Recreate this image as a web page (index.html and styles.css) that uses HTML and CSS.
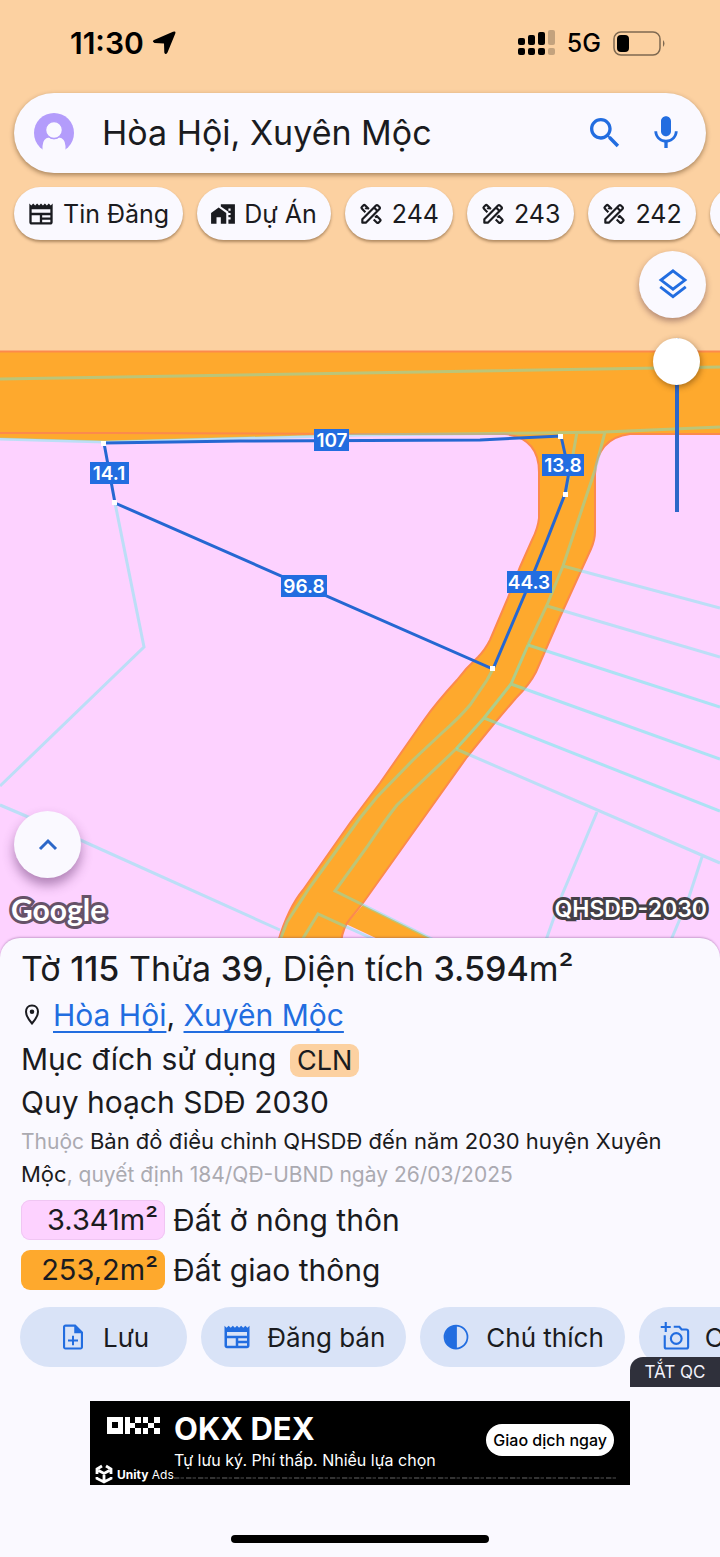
FILE: index.html
```html
<!DOCTYPE html>
<html lang="vi">
<head>
<meta charset="utf-8">
<meta name="viewport" content="width=device-width, initial-scale=1">
<title>Hòa Hội, Xuyên Mộc</title>
<link rel="stylesheet" href="styles.css">
</head>
<body>
<svg class="defs" aria-hidden="true">
  <symbol id="i-news" viewBox="0 0 24 24"><path d="M22 3l-1.67 1.67L18.67 3 17 4.67 15.33 3l-1.66 1.67L12 3l-1.67 1.67L8.67 3 7 4.67 5.33 3 3.67 4.67 2 3v16c0 1.1.9 2 2 2h16c1.1 0 2-.9 2-2V3zM11 19H4v-6h7v6zm9 0h-7v-2h7v2zm0-4h-7v-2h7v2zm0-4H4V8h16v3z"/></symbol>
  <symbol id="i-design" viewBox="0 0 24 24"><g fill="none" stroke="currentColor" stroke-width="2" stroke-linejoin="round"><path d="M14.500 17L17.500 20Q18.200 20.600 18.900 20L20.500 18.400Q21.200 17.700 20.500 17L17.300 13.800L15.800 15.300M6.800 10.300L3.500 7Q2.800 6.300 3.500 5.600L5.100 4Q5.800 3.300 6.500 4L10 7.500M8.300 5.800L6.800 7.300"/><path d="M4 20V16.800L16.600 4.200Q17.500 3.300 18.400 4.200L19.800 5.600Q20.700 6.500 19.800 7.400L7.200 20zM14.800 6L18 9.200"/></g></symbol>
</svg>

<main class="screen">
  <section class="map">
    <svg class="map-canvas" viewBox="0 0 720 958" preserveAspectRatio="xMidYMin slice" role="img" aria-label="Bản đồ quy hoạch">
      <rect width="720" height="360" fill="#fcd1a1"/>
      <rect y="434" width="720" height="524" fill="#fdd2ff"/>
      <rect y="351" width="720" height="84" fill="#fea92d"/>
      <path d="M0 434 V438 L105 441 L360 434z" fill="#fea92d"/>
      <path class="road" d="M505 434 Q539 438 539 472 V518 Q538 528 532 540 L520 567 L507 600 L490 640 Q485 650 478 657 Q466 668 457 680 Q436 703 424 720 L380 783 L350 823 L303 890 Q288 908 278 942 H341 Q343 927 350 919 L363 903 L410 837 L467 757 L493 725 L516 698 Q530 684 536 672 L560 617 L580 573 L591 549 Q595 540 595 532 V474 Q597 438 630 434z"/>
      <path d="M363 905 L434 940 H380 L346 924z" fill="#fea92d"/>
      <path class="road-edge" d="M0 351.500H720M0 433H110L360 434H505Q539 438 539 472V518Q538 528 532 540L520 567L507 600L490 640Q485 650 478 657Q466 668 457 680Q436 703 424 720L380 783L350 823L303 890Q288 908 278 942M341 942Q343 927 350 919L363 903L410 837L467 757L493 725L516 698Q530 684 536 672L560 617L580 573L591 549Q595 540 595 532V474Q597 438 630 434H720"/>
      <path class="parcel" d="M0 379L360 373L720 367M0 439L105 442L360 435L540 433L605 432L720 427M577 432L572 460L566 494M493 669L487 680L470 705Q460 717 443 732L413 760L377 797L360 818L310 887L287 922L280 940M605 432L595 470L563 566L547 605L528 645M456 749L397 805Q385 820 367 847L335 891L434 940M302 940L318 914L375 940M563 566L720 608M547 606L720 657M456 749L720 863M597 812L562 895L546 940M702 857L688 900L671 940M115 503L144 647L0 786M0 805L47 825L280 930"/>
      <path class="parcel parcel-strong" d="M528 645L511 684L484 718L456 749M528 645L720 707M511 684L720 759M484 718L720 811"/>
      <path class="plot" d="M104 443L240 441L480 440L561 436L569 472L565 494L547 540L530 582L493 669L115 503z"/>
      <g fill="#fff">
        <rect x="101" y="441" width="5" height="5"/><rect x="112" y="500" width="5" height="5"/><rect x="558" y="434" width="5" height="5"/><rect x="563" y="492" width="5" height="5"/><rect x="490" y="666" width="5" height="5"/>
      </g>
      <g fill="#226de0">
        <rect x="314" y="429" width="35" height="22"/><rect x="90" y="462" width="39" height="22"/><rect x="281" y="575" width="46" height="22"/><rect x="542" y="454" width="42" height="22"/><rect x="507" y="571" width="45" height="22"/>
      </g>
      <g class="length">
        <text x="332" y="447">107</text><text x="109" y="480">14.1</text><text x="304" y="593">96.8</text><text x="563" y="472">13.8</text><text x="529" y="589">44.3</text>
      </g>
    </svg>

    <header class="top">
      <div class="status">
        <span class="time">11:30</span>
        <svg class="arrow" width="24" height="24" viewBox="0 0 24 24"><path d="M21 .8Q24.300-.5 23.200 2.800L15.500 21.500Q13.500 24.500 12.300 21.500L12 12.500L2.500 12Q-.5 10.500 2 9z"/></svg>
        <span class="spacer"></span>
        <svg width="37" height="26" viewBox="0 0 37 26"><rect y="8" width="7" height="7" rx="2"/><rect x="10" y="5" width="7" height="10" rx="2"/><rect x="20" y="2" width="7" height="13" rx="2"/><rect y="18" width="7" height="7" rx="2"/><rect x="10" y="18" width="7" height="7" rx="2"/><rect x="20" y="18" width="7" height="7" rx="2"/><g opacity=".22"><rect x="30" width="7" height="15" rx="2"/><rect x="30" y="18" width="7" height="7" rx="2"/></g></svg>
        <span class="net">5G</span>
        <svg width="53" height="25" viewBox="0 0 53 25"><rect x="1" y="1" width="46" height="23" rx="7" fill="none" stroke="#000" stroke-opacity=".5" stroke-width="1.500"/><rect x="4" y="4" width="12" height="17" rx="4"/><path d="M50 9q3 3.500 0 7z" opacity=".5"/></svg>
      </div>

      <form class="search">
        <svg class="avatar" width="42" height="42" viewBox="0 0 42 42"><circle cx="21" cy="21" r="20" fill="#b39cfb"/><path d="M9.500 42V34Q10 26 16 25.500Q21 29 26 25.500Q32 26 32.500 34V42z" fill="#faf9ff"/><circle cx="21" cy="18" r="8.500" fill="#faf9ff" stroke="#b39cfb" stroke-width="1.500"/></svg>
        <input class="query" type="text" aria-label="Tìm kiếm" value="Hòa Hội, Xuyên Mộc">
        <button class="icon-btn" type="button" aria-label="Tìm"><svg width="40" height="40" viewBox="0 0 24 24"><path d="M15.500 14h-.79l-.28-.27C15.410 12.590 16 11.110 16 9.500 16 5.910 13.090 3 9.500 3S3 5.910 3 9.500 5.910 16 9.500 16c1.610 0 3.090-.59 4.230-1.570l.27.28v.79l5 4.990L20.490 19l-4.990-5zm-6 0C7.010 14 5 11.990 5 9.500S7.010 5 9.500 5 14 7.010 14 9.500 11.990 14 9.500 14z"/></svg></button>
        <button class="icon-btn" type="button" aria-label="Giọng nói"><svg width="40" height="40" viewBox="0 0 24 24"><path d="M12 14c1.660 0 3-1.340 3-3V5c0-1.660-1.340-3-3-3S9 3.340 9 5v6c0 1.660 1.340 3 3 3zM17.300 11c0 3-2.540 5.100-5.300 5.100S6.700 14 6.700 11H5c0 3.410 2.720 6.230 6 6.720V21h2v-3.280c3.280-.48 6-3.300 6-6.720z"/></svg></button>
      </form>

      <nav class="chips">
        <button class="chip"><svg width="28" height="28"><use href="#i-news"/></svg>Tin Đăng</button>
        <button class="chip"><svg width="26" height="26" viewBox="0 0 24 24"><path d="M1 11v10h5v-6h4v6h5V11L8 6z"/><path d="M10 3v1.970l7 5V11h2v2h-2v2h2v2h-2v4h6V3H10zm9 6h-2V7h2z"/></svg>Dự Án</button>
        <button class="chip"><svg width="26" height="26"><use href="#i-design"/></svg>244</button>
        <button class="chip"><svg width="26" height="26"><use href="#i-design"/></svg>243</button>
        <button class="chip"><svg width="26" height="26"><use href="#i-design"/></svg>242</button>
        <button class="chip" aria-label="Tờ tiếp theo"><svg width="26" height="26"><use href="#i-design"/></svg></button>
      </nav>
    </header>

    <div class="controls">
      <button class="round" aria-label="Lớp bản đồ"><svg class="line-icon" width="36" height="36" viewBox="0 0 24 24" stroke="#226de0" stroke-width="1.900"><path d="M12 2.600L20 8.700L12 14.800L4 8.700zM3.500 13.300L12 19.800L20.500 13.300"/></svg></button>
      <input class="opacity" type="range" min="0" max="100" value="100" aria-label="Độ mờ">
    </div>

    <div class="map-foot">
      <button class="round" aria-label="Mở rộng"><svg class="line-icon" width="24" height="24" viewBox="0 0 24 24" stroke="#2c67c8" stroke-width="3"><path d="M4 16L12 8L20 16"/></svg></button>
      <div class="credits">
        <span class="google">Google</span>
        <span class="plan">QHSDĐ-2030</span>
      </div>
    </div>
  </section>

  <section class="sheet">
    <div class="info">
      <h1 class="title">Tờ <b>115</b> Thửa <b>39</b>, Diện tích <b>3.594</b>m²</h1>
      <p class="place"><svg class="line-icon" width="24" height="24" viewBox="0 0 24 24" stroke="#1a1b20" stroke-width="2"><path d="M12 2.500C8 2.500 6 5.500 6 8.800C6 13.500 12 20.500 12 20.500S18 13.500 18 8.800C18 5.500 16 2.500 12 2.500z"/><circle cx="12" cy="8.800" r="1.300" fill="#1a1b20"/></svg><span><a href="#">Hòa Hội</a>, <a href="#">Xuyên Mộc</a></span></p>
      <p class="line">Mục đích sử dụng <span class="tag">CLN</span></p>
      <p class="line">Quy hoạch SDĐ 2030</p>
      <p class="source">Thuộc <em>Bản đồ điều chỉnh QHSDĐ đến năm 2030 huyện Xuyên<br>Mộc</em>, quyết định 184/QĐ-UBND ngày 26/03/2025</p>
      <dl class="areas">
        <div><dt class="area pink">3.341m²</dt><dd>Đất ở nông thôn</dd></div>
        <div><dt class="area orange">253,2m²</dt><dd>Đất giao thông</dd></div>
      </dl>
    </div>

    <div class="actions">
      <div class="action-row">
        <button class="action wide"><svg width="30" height="30" viewBox="0 0 24 24"><path d="M12.800 11h-1.600v3H8v1.600h3.200v3h1.600v-3H16V14h-3.200zM14 2H6c-1.100 0-2 .9-2 2v16c0 1.100.89 2 1.990 2H18c1.100 0 2-.9 2-2V8zm4.300 18.300H5.700V3.700H13V9h5.300z"/></svg>Lưu</button>
        <button class="action"><svg width="30" height="30"><use href="#i-news"/></svg>Đăng bán</button>
        <button class="action"><svg width="30" height="30" viewBox="0 0 24 24"><circle cx="12" cy="12" r="9.200" fill="none" stroke="currentColor" stroke-width="1.400"/><path d="M12.700 2.500A9.500 9.500 0 1 0 12.700 21.500z"/></svg>Chú thích</button>
        <button class="action"><svg class="line-icon" width="30" height="30" viewBox="0 0 24 24" stroke="currentColor" stroke-width="1.700"><path d="M4.600 0V8M.6 4H8.600M11 3.800H15.500L17.300 6H21Q22.500 6 22.500 7.500V20Q22.500 21.200 21 21.200H5Q3.800 21.200 3.800 20V10.500"/><circle cx="13" cy="13.200" r="4.300"/></svg>Chụp</button>
      </div>
      <button class="close-ad">TẮT QC</button>
    </div>

    <aside class="ad">
      <div class="ad-logos">
        <svg width="53" height="17" viewBox="0 0 53 17" fill="#fff"><path fill-rule="evenodd" d="M0 0h16v17H0zM5 5v6h6V5z"/><path d="M18 0h5v17h-5zM23 6h5v5h-5zM28 0h6v6h-6zM28 11h6v6h-6zM36 0h5v6h-5zM47 0h6v6h-6zM41 6h6v5h-6zM36 11h5v6h-5zM47 11h6v6h-6z"/></svg>
        <div class="unity"><svg class="line-icon" width="18" height="20" viewBox="0 0 18 20" stroke="#fff" stroke-width="2.800"><path d="M7 2L2 5V10M11 2L16 5V10M2 13V14.500L9 18L16 14.500V13M3.500 6.500L9 9.500L14.500 6.500M9 9.500V17"/></svg><span><b>Unity</b> Ads</span></div>
      </div>
      <div class="ad-copy">
        <strong>OKX DEX</strong>
        <span>Tự lưu ký. Phí thấp. Nhiều lựa chọn</span>
        <i class="fine"></i>
      </div>
      <button class="ad-cta">Giao dịch ngay</button>
    </aside>
    <div class="home-bar"></div>
  </section>
</main>
</body>
</html>
```
FILE: styles.css
```css
* { box-sizing: border-box; margin: 0; }
body { font-family: Inter, "Liberation Sans", sans-serif; color: #1a1b20; background: #faf9ff; }
button { font: inherit; color: inherit; border: 0; padding: 0; background: none; }
svg { fill: currentColor; flex: none; }
.line-icon { fill: none; }
.defs { position: absolute; width: 0; height: 0; }

.screen { display: flex; flex-direction: column; min-height: 100vh; }

/* Map */
.map { position: relative; flex: 1; display: flex; flex-direction: column; padding-bottom: 30px; overflow: hidden; background: #fdd2ff; }
.map-canvas { position: absolute; inset: 0; width: 100%; height: 100%; }
.road { fill: #fea92d; }
.road-edge { fill: none; stroke: #fc8a4c; stroke-width: 2; }
.parcel { fill: none; stroke: rgba(91, 241, 233, .4); stroke-width: 3; }
.parcel-strong { stroke: rgba(91, 241, 233, .5); }
.plot { fill: none; stroke: #2567d2; stroke-width: 3; }
.length { fill: #fff; font-size: 19px; font-weight: 600; text-anchor: middle; }

.top, .controls, .map-foot { position: relative; }
.status { display: flex; align-items: center; height: 93px; padding: 0 54px 7px 70px; color: #000; }
.time { font-size: 30px; font-weight: 600; }
.arrow { margin-left: 8px; }
.spacer { flex: 1; }
.net { margin: 0 12px; font-size: 25px; font-weight: 500; }

.search { display: flex; align-items: center; height: 80px; margin: 0 14px; padding: 0 20px 0 19px; border-radius: 40px; background: #faf9ff; box-shadow: 0 2px 5px rgba(60, 30, 0, .45); }
.query { flex: 1; min-width: 0; margin-left: 27px; padding: 0 0 2px; border: 0; outline: 0; background: none; font: 34px Inter, sans-serif; color: #1a1b20; }
.icon-btn { display: flex; margin-left: 21px; color: #226de0; }

.chips { display: flex; gap: 14px; padding: 14px 0 11px 14px; overflow: hidden; }
.chip { display: flex; flex: none; align-items: center; gap: 8px; height: 53px; padding: 0 14px 0 13px; border-radius: 27px; background: #faf9ff; font-size: 25px; box-shadow: 0 2px 3px rgba(60, 30, 0, .4); }

.controls { display: flex; flex-direction: column; align-items: flex-end; gap: 20px; padding-right: 14px; }
.round { display: flex; align-items: center; justify-content: center; width: 67px; height: 67px; border-radius: 50%; background: #faf9ff; box-shadow: 0 3px 6px rgba(60, 20, 40, .4); }
.opacity { appearance: none; writing-mode: vertical-lr; direction: rtl; width: 47px; height: 174px; margin: 0 6px 0 0; background: linear-gradient(#2c67c8, #2c67c8) center / 4px 100% no-repeat; }
.opacity::-webkit-slider-thumb { appearance: none; width: 47px; height: 47px; border-radius: 50%; background: #fff; box-shadow: 1px 2px 6px rgba(60, 30, 0, .45); }

.map-foot { margin-top: auto; padding: 0 13px 0 14px; }
.map-foot .round { box-shadow: 0 7px 12px rgba(80, 30, 90, .45); }
.credits { display: flex; justify-content: space-between; align-items: center; height: 50px; padding-top: 12px; }
.google, .plan { color: #fff; paint-order: stroke fill; }
.google { margin-left: -3px; font: 30px Lato, sans-serif; font-weight: 700; -webkit-text-stroke: 6px #665268; }
.plan { font-size: 23px; font-weight: 600; -webkit-text-stroke: 6px #444047; }

/* Detail sheet */
.sheet { position: relative; margin-top: -20px; padding-bottom: 14px; border-radius: 20px 20px 0 0; background: #faf9ff; box-shadow: 0 -1px 2px rgba(90, 40, 100, .3); }
.info { padding: 10px 21px 0; }
.title { font-size: 34px; font-weight: 400; line-height: 42px; }
.title b { font-weight: 500; }
.place { display: flex; align-items: center; gap: 9px; font-size: 30px; line-height: 50px; }
.place svg { margin-left: -1px; }
.place a { color: #226de0; text-decoration-thickness: 2px; text-underline-offset: 5px; text-decoration-skip-ink: none; }
.line { font-size: 30px; line-height: 43px; }
.place + .line { margin-top: -2px; }
.tag { display: inline-block; margin-left: 5px; padding: 0 7px; border-radius: 9px; background: #fcd1a1; font-size: 27px; line-height: 33px; }
.source { padding: 1px 0 9px; font-size: 21px; line-height: 32px; color: #abaab1; white-space: nowrap; }
.source em { font-style: normal; font-size: 22px; color: #1a1b20; }
.areas { display: grid; gap: 10px; }
.areas div { display: flex; align-items: center; gap: 8px; }
.area { width: 144px; padding-right: 7px; border-radius: 9px; font-size: 29px; line-height: 40px; text-align: right; }
.areas dd { font-size: 30px; line-height: 40px; }
.pink { background: #fdd2ff; box-shadow: inset 0 0 0 1px #f0c6f3; }
.orange { background: #fea92d; }

.actions { position: relative; padding-top: 17px; }
.action-row { display: flex; gap: 14px; padding-left: 20px; overflow: hidden; }
.action { display: flex; flex: none; align-items: center; gap: 15px; height: 60px; padding: 0 21px; border-radius: 30px; background: #d9e3f7; font-size: 26px; }
.action.wide { padding: 0 38px; }
.action svg { color: #226de0; }
.close-ad { position: absolute; right: 0; bottom: -20px; width: 90px; height: 30px; border-radius: 13px 0 0; background: #2f303b; color: #f3f2fa; font-size: 17px; }

.ad { display: flex; width: 75%; height: 84px; margin: 34px auto 50px; background: #000; color: #fff; }
.ad-logos { display: flex; flex-direction: column; justify-content: space-between; width: 84px; padding: 16px 0 1px 5px; }
.ad-logos > svg { margin-left: 12px; fill: #fff; }
.unity { display: flex; align-items: center; gap: 4px; font-size: 12px; white-space: nowrap; }
.ad-copy { display: flex; flex: 1; flex-direction: column; min-width: 0; white-space: nowrap; }
.ad-copy strong { padding-top: 10px; font-size: 31px; font-weight: 700; line-height: 36px; }
.ad-copy span { font-size: 16px; line-height: 26px; }
.fine { width: 444px; height: 2px; margin-top: 4px; background: repeating-linear-gradient(90deg, #333 0 5px, #111 5px 7px, #282828 7px 10px, #000 10px 12px); }
.ad-cta { align-self: flex-start; height: 32px; margin: 23px 16px 0 0; padding: 0 7px; border-radius: 16px; background: #fff; color: #000; font-size: 16px; font-weight: 500; white-space: nowrap; }
.home-bar { width: 258px; height: 8px; margin: 0 auto; border-radius: 4px; background: #000; }
```
